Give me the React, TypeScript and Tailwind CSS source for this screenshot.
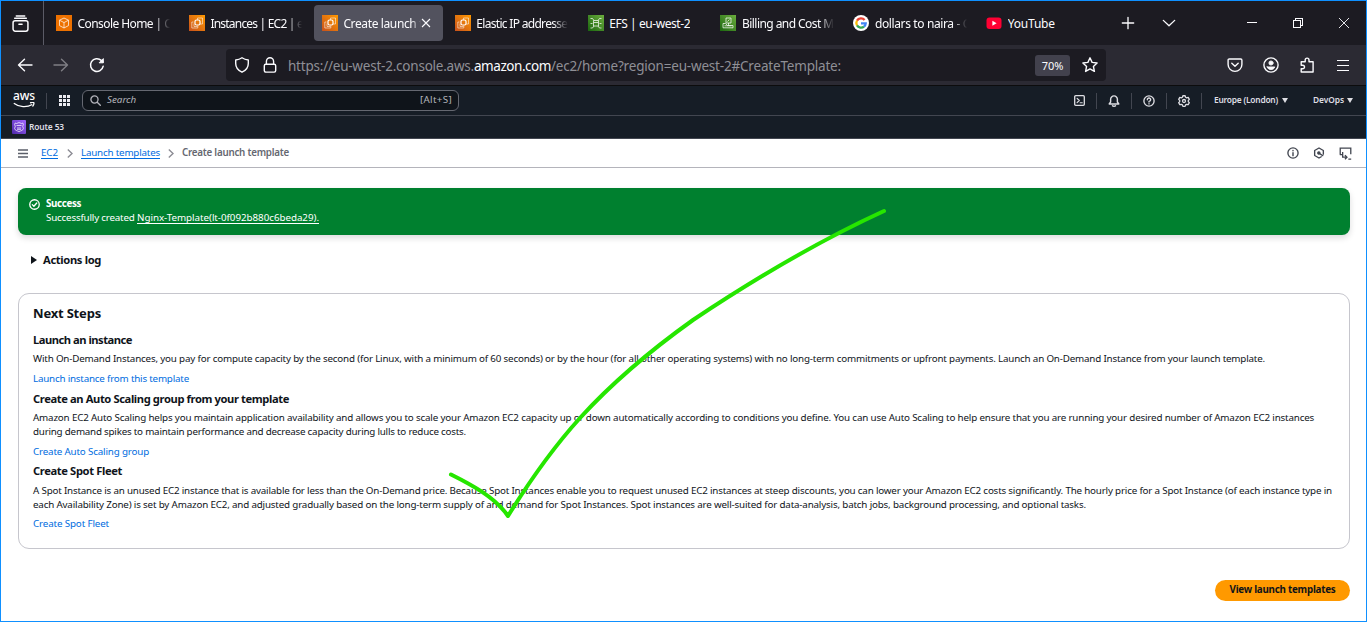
import React from 'react';

type FavKind = 'console' | 'ec2' | 'efs' | 'billing' | 'google' | 'youtube';

const Fav = ({ kind }: { kind: FavKind }) => {
  if (kind === 'google')
    return (
      <svg viewBox="0 0 16 16" className="size-4 shrink-0">
        <circle cx="8" cy="8" r="8" fill="#fff" />
        <g fill="none" strokeWidth="2.3">
          <path d="M11.600 4.900A4.700 4.700 0 0 0 4 5.600" stroke="#ea4335" />
          <path d="M4 5.600A4.700 4.700 0 0 0 4 10.400" stroke="#fbbc05" />
          <path d="M4 10.400A4.700 4.700 0 0 0 11 11.600" stroke="#34a853" />
          <path d="M11 11.600A4.700 4.700 0 0 0 12.700 8.300H8" stroke="#4285f4" />
        </g>
      </svg>
    );
  if (kind === 'youtube')
    return (
      <svg viewBox="0 0 16 16" className="size-4 shrink-0">
        <rect x="0.5" y="2.500" width="15" height="11.500" rx="3" fill="#f03" />
        <path d="M6.400 5.800v4.900l4.200-2.450z" fill="#fff" />
      </svg>
    );
  const green = kind === 'efs' || kind === 'billing';
  return (
    <svg viewBox="0 0 16 16" className="size-4 shrink-0">
      <defs>
        <linearGradient id={'fav' + kind} x1="0" y1="1" x2="1" y2="0">
          <stop offset="0" stopColor={green ? '#1b660f' : kind === 'console' ? '#ed7100' : '#c8511b'} />
          <stop offset="1" stopColor={green ? '#6cae3e' : kind === 'console' ? '#ed7100' : '#ff9900'} />
        </linearGradient>
      </defs>
      <rect width="16" height="16" fill={`url(#fav${kind})`} />
      <g fill="none" stroke="#fff" strokeOpacity=".8" strokeWidth=".9">
        {kind === 'console' && <path d="M8 3l4.500 2.200v5.400L8 13l-4.500-2.400V5.200zM3.500 5.200L8 7.600l4.500-2.400M8 7.600V13" />}
        {kind === 'ec2' && (
          <g>
            <rect x="6" y="5" width="5" height="5" rx="1.500" strokeWidth="1.200" strokeOpacity="1" />
            <path d="M8.500 5V3h5v6h-2.500M4.500 7H2.800v6h6v-2.500M5 8.500v3h3.500" strokeOpacity=".6" />
          </g>
        )}
        {kind === 'efs' && (
          <path d="M5.500 5.500h5v2h-5zM5.500 7.500v3.500h5V7.500M2.500 3.500h2l1.500 2M13.500 3.500h-2l-1.500 2M2.500 13h2l1.500-2M13.500 13h-2l-1.500-2M2.500 8.500h2M11.500 8.500h2" />
        )}
        {kind === 'billing' && <path d="M6 3h5v5H6zM3 8.500h2.500l2 2h5.500M3 12.800h10M3 8.500v4.300M13 10.500v2.300M7.500 6.500l2-2M8.500 8v2.500M4.500 10.800h7" />}
      </g>
    </svg>
  );
};

const fadeClasses = {
  none: '',
  wide: 'w-[92px] [mask-image:linear-gradient(to_right,#000_84%,transparent)]',
  active: 'w-[78px] [mask-image:linear-gradient(to_right,#000_88%,transparent)]',
};

const Tab = ({ kind, c, text, fade = 'wide' }: { kind: FavKind; c: string; text: string; fade?: keyof typeof fadeClasses }) => (
  <div className="h-full w-[132.9px] shrink-0 py-1 pr-[3.9px]">
    <div className={'flex h-full items-center rounded pl-2 ' + (fade === 'active' ? 'bg-[#52525e]' : '')}>
      <Fav kind={kind} />
      <div className={'ml-[5.6px] overflow-hidden whitespace-pre pt-px text-xs leading-5 text-[#fbfbfe] ' + fadeClasses[fade] + ' ' + c}>{text}</div>
      {fade === 'active' && (
        <svg viewBox="0 0 10 10" className="size-[10px] shrink-0" stroke="#fbfbfe" strokeWidth="1.1">
          <path d="M1 1l8 8M9 1L1 9" />
        </svg>
      )}
    </div>
  </div>
);

const Ico = ({ c, children }: { c: string; children: React.ReactNode }) => (
  <svg viewBox="0 0 16 16" fill="none" stroke="currentColor" strokeWidth="1.4" strokeLinecap="round" strokeLinejoin="round" className={'shrink-0 ' + c}>
    {children}
  </svg>
);

const Divider = ({ c }: { c: string }) => <div className={'h-4 w-px shrink-0 bg-[#424650] ' + c} />;

const TabBar = () => (
  <div className="flex h-11 shrink-0 items-center bg-[#1c1b22] text-[#fbfbfe]">
    <div className="flex h-full w-[43px] shrink-0 items-center justify-center border-r border-[#5b5b66]">
      <Ico c="ml-[-3px] size-[17px]">
        <path d="M4 .9h8M2.500 3.100h11" strokeWidth="1.300" />
        <rect x="1" y="5.300" width="14" height="9.900" rx="2" />
        <path d="M6.500 8.600h3" />
      </Ico>
    </div>
    <div className="flex h-full shrink-0 pl-[4px]">
      <Tab kind="console" c="tracking-[-0.58px]" text="Console Home | C" />
      <Tab kind="ec2" c="tracking-[-0.8px]" text="Instances | EC2 | e" />
      <Tab kind="ec2" c="tracking-[-0.374px]" text="Create launch t" fade="active" />
      <Tab kind="ec2" c="tracking-[-0.69px]" text="Elastic IP addresse" />
      <Tab kind="efs" c="tracking-[-0.427px]" text="EFS | eu-west-2" fade="none" />
      <Tab kind="billing" c="tracking-[-0.56px]" text="Billing and Cost M" />
      <Tab kind="google" c="tracking-[-0.377px]" text="dollars to naira - G" />
      <Tab kind="youtube" c="tracking-[-0.217px]" text="YouTube" fade="none" />
    </div>
    <Ico c="ml-[10px] size-[14px]">
      <path d="M8 1.500v13M1.500 8h13" strokeWidth="1.500" />
    </Ico>
    <Ico c="ml-[27px] size-[14px]">
      <path d="M1.500 5L8 11.200 14.500 5" strokeWidth="1.500" />
    </Ico>
    <svg viewBox="0 0 10 10" className="ml-[71px] size-[10px] shrink-0" stroke="currentColor" shapeRendering="crispEdges">
      <path d="M0 4.500h10" />
    </svg>
    <svg viewBox="0 0 10 10" className="ml-[36px] size-[10px] shrink-0" fill="none" stroke="currentColor" shapeRendering="crispEdges">
      <path d="M.5 2.500h7v7h-7zM2.500 2.500v-2h7v7h-2" />
    </svg>
    <svg viewBox="0 0 10 10" className="ml-[36px] size-[10px] shrink-0" stroke="currentColor" strokeWidth=".9">
      <path d="M0 0l10 10M10 0L0 10" />
    </svg>
  </div>
);

const Toolbar = () => (
  <div className="flex h-[41px] shrink-0 items-center border-b border-[#0c0c0d] bg-[#2b2a33] text-[#fbfbfe]">
    <Ico c="ml-[16px] size-4">
      <path d="M15 8H1.500M7.500 2.300L1.500 8l6 5.700" />
    </Ico>
    <Ico c="ml-5 size-4 opacity-40">
      <path d="M1 8h13.500M8.500 2.300l6 5.700-6 5.700" />
    </Ico>
    <Ico c="ml-5 size-4">
      <path d="M14.200 9.200A6.400 6.400 0 1 1 12.300 3.400L14 5" strokeWidth="1.500" />
      <path d="M14.300 2v3.800h-3.800z" fill="currentColor" strokeWidth="1" />
    </Ico>
    <div className="ml-[121px] flex h-8 w-[880px] shrink-0 items-center rounded bg-[#1c1b22]">
      <Ico c="ml-[8px] size-4">
        <path d="M8 .8C9.700 2 12 2.800 14.300 3v3.400c0 3.700-2.500 7-6.300 8.800-3.800-1.800-6.300-5.100-6.300-8.800V3C4 2.800 6.300 2 8 .8z" />
      </Ico>
      <Ico c="ml-[12px] size-4">
        <rect x="2.300" y="7.200" width="11.400" height="7.900" rx="1.500" />
        <path d="M4.400 7V4.400a3.600 3.600 0 0 1 7.200 0V7" />
      </Ico>
      <div className="ml-[10px] flex whitespace-pre pt-0.5 text-[13.5px] leading-5 text-[#8f8f96]">
        <span className="tracking-[-0.223px]">https://eu-west-2.console.aws.</span>
        <span className="tracking-[-0.452px] text-[#fbfbfe]">amazon.com</span>
        <span className="tracking-[-0.187px]">/ec2/home?region=eu-west-2#CreateTemplate:</span>
      </div>
      <div className="ml-auto flex h-[21px] w-[35px] items-center justify-center rounded-[3px] bg-[#42414d] pt-px text-[11px] leading-none">70%</div>
      <Ico c="ml-[12px] mr-2 size-4">
        <path d="M8 .8l2.100 4.600 5 .6-3.700 3.400 1 5L8 11.900l-4.400 2.500 1-5L.9 6l5-.6z" />
      </Ico>
    </div>
    <Ico c="ml-[121px] size-4">
      <path d="M2.300 2h11.400a1.200 1.200 0 0 1 1.200 1.200V7.500a6.900 6.900 0 0 1-13.800 0V3.200A1.200 1.200 0 0 1 2.300 2zM4.800 6.200L8 9.300l3.200-3.100" />
    </Ico>
    <Ico c="ml-5 size-4">
      <circle cx="8" cy="8" r="7.100" />
      <circle cx="8" cy="6" r="2.100" fill="currentColor" strokeWidth=".8" />
      <path d="M4.200 9.900h7.600c-.5 1.700-2 2.700-3.800 2.700s-3.300-1-3.800-2.700z" fill="currentColor" strokeWidth=".8" />
    </Ico>
    <Ico c="ml-5 size-4">
      <path d="M2.200 15h11.900V4.800H10V3a1.900 1.900 0 0 0-3.800 0v1.800H2.200v3.400h1.500a1.800 1.800 0 0 1 0 3.600H2.200z" />
    </Ico>
    <svg viewBox="0 0 12 11" className="ml-[22px] h-[11px] w-3 shrink-0" stroke="currentColor" shapeRendering="crispEdges">
      <path d="M0 .5h12M0 5.500h12M0 10.500h12" />
    </svg>
  </div>
);

const AwsHeader = () => (
  <div className="flex h-[30px] shrink-0 items-center border-b border-[#424650] bg-[#161d26] text-[#dedee3]">
    <div className="ml-[11px] flex w-6 shrink-0 flex-col items-center">
      <div className="mt-[-1px] h-[10px] text-[12px] font-medium leading-[8px] tracking-[-0.2px] text-white">aws</div>
      <svg viewBox="0 0 22 6" className="h-[6px] w-[22px]" fill="none" stroke="#fff" strokeWidth="1.300">
        <path d="M.8 1.200c5.500 4.200 13 4.400 18.500 1.300M17 .8c2-.5 4-.5 4 .2s-.4 2.400-1.500 3.500" />
      </svg>
    </div>
    <Divider c="ml-[10px]" />
    <svg viewBox="0 0 11 11" className="ml-[12px] size-[11px] shrink-0" fill="#ebebf0" shapeRendering="crispEdges">
      <path d="M0 0h3v3H0zM4 0h3v3H4zM8 0h3v3H8zM0 4h3v3H0zM4 4h3v3H4zM8 4h3v3H8zM0 8h3v3H0zM4 8h3v3H4zM8 8h3v3H8z" />
    </svg>
    <div className="ml-[12px] flex h-[21px] w-[377px] shrink-0 items-center rounded-[6px] border border-[#656871] bg-[#0f141a] text-[9.8px] text-[#b4b4bb]">
      <Ico c="ml-[7px] size-[11px]">
        <circle cx="6.500" cy="6.500" r="5.200" strokeWidth="1.900" />
        <path d="M10.500 10.500l4.500 4.500" strokeWidth="1.900" />
      </Ico>
      <div className="ml-[6px] italic">Search</div>
      <div className="ml-auto mr-[6px] mt-[-1px] tracking-[0.32px]">[Alt+S]</div>
    </div>
    <Ico c="ml-[615px] size-[11px]">
      <rect x="1" y="1" width="14" height="14" rx="1.500" strokeWidth="1.900" />
      <path d="M4.500 4.800L7.700 8l-3.200 3.200M9 11.300h3" strokeWidth="1.700" />
    </Ico>
    <Divider c="ml-[11px]" />
    <Ico c="ml-[11px] size-[12px]">
      <path d="M8 1.200a4.500 4.500 0 0 0-4.500 4.500v3.600L1.600 12h12.800l-1.900-2.700V5.700A4.500 4.500 0 0 0 8 1.200zM6 14.300c.8 1 3.200 1 4 0" strokeWidth="1.900" />
    </Ico>
    <Divider c="ml-[11px]" />
    <Ico c="ml-[11px] size-[12px]">
      <circle cx="8" cy="8" r="6.800" strokeWidth="1.800" />
      <path d="M5.800 6.300A2.200 2.200 0 1 1 8 8.400v.9M8 11.500v.4" strokeWidth="1.800" />
    </Ico>
    <Divider c="ml-[11px]" />
    <Ico c="ml-[11px] size-[12px]">
      <path d="M6.500 1h3l.6 2 1.500.8 2-.6 1.500 2.600L13.700 7.300v1.500l1.400 1.500-1.500 2.600-2-.5-1.500.8-.6 1.900h-3l-.6-1.900-1.500-.8-2 .5L.900 10.300l1.400-1.500V7.300L.9 5.800l1.500-2.600 2 .6 1.500-.8z" strokeWidth="1.700" />
      <circle cx="8" cy="8" r="2" strokeWidth="1.700" />
    </Ico>
    <Divider c="ml-[11px]" />
    <div className="ml-[12px] whitespace-nowrap text-[8.4px] font-semibold tracking-[-0.216px]">Europe (London)</div>
    <svg viewBox="0 0 6 5" className="ml-[4px] h-[5px] w-[6px] shrink-0" fill="currentColor">
      <path d="M0 0h6L3 5z" />
    </svg>
    <div className="ml-[25px] text-[8.4px] font-semibold tracking-[-0.068px]">DevOps</div>
    <svg viewBox="0 0 6 5" className="ml-[3px] h-[5px] w-[6px] shrink-0" fill="currentColor">
      <path d="M0 0h6L3 5z" />
    </svg>
  </div>
);

const ServiceBar = () => (
  <div className="flex h-[23px] shrink-0 items-center border-b border-[#424650] bg-[#161d26] text-[#dedee3]">
    <svg viewBox="0 0 14 14" className="ml-[11px] size-[14px] shrink-0">
      <defs>
        <linearGradient id="r53" x1="0" y1="1" x2="1" y2="0">
          <stop offset="0" stopColor="#4d27a8" />
          <stop offset="1" stopColor="#a166ff" />
        </linearGradient>
      </defs>
      <rect width="14" height="14" rx="1" fill="url(#r53)" />
      <g fill="none" stroke="#fff" strokeOpacity=".8" strokeWidth=".9">
        <path d="M3.200 3l1.300.5L7 2.600l2.500.9 1.300-.5.600 1.700-.7 1.500.7 2.300C11 10.500 9 10.600 7 11.600 5 10.600 3 10.500 2.600 8.500l.7-2.300-.7-1.500z" />
        <path d="M4.500 5.500h5M5 7.500c.5.800 1.500.8 2 0 .5.800 1.500.8 2 0M5 9.300h4" />
      </g>
    </svg>
    <div className="ml-[3px] text-[8.4px] font-semibold tracking-[-0.121px]">Route 53</div>
  </div>
);

const Chevron = ({ c }: { c: string }) => (
  <svg viewBox="0 0 6 9" className={'h-[9px] w-[6px] shrink-0 ' + c} fill="none" stroke="#8c8c94" strokeWidth="1.400">
    <path d="M.8.6L5 4.500.8 8.400" />
  </svg>
);

const Breadcrumbs = () => (
  <div className="flex h-[29px] shrink-0 items-center border-b border-[#b4b4bb] text-[9.8px] leading-[11px] text-[#006ce0]">
    <svg viewBox="0 0 10 9" className="ml-[17px] h-[9px] w-[10px] shrink-0" stroke="#5b5f69" strokeWidth="1.400">
      <path d="M0 1h10M0 4.500h10M0 8h10" />
    </svg>
    <div className="ml-[13px] mt-[-1px] whitespace-nowrap border-b border-[#006ce0] tracking-[-0.083px]">EC2</div>
    <Chevron c="ml-[9px]" />
    <div className="ml-[8px] mt-[-1px] whitespace-nowrap border-b border-[#006ce0] tracking-[-0.192px]">Launch templates</div>
    <Chevron c="ml-[8px]" />
    <div className="ml-[8px] mt-[-1px] whitespace-nowrap pb-px font-semibold tracking-[-0.237px] text-[#656871]">Create launch template</div>
    <div className="ml-auto mr-[14px] flex items-center text-[#424650]">
      <Ico c="size-[12px]">
        <circle cx="8" cy="8" r="6.800" strokeWidth="1.800" />
        <path d="M8 7.500v4M8 4.600v.3" strokeWidth="1.900" />
      </Ico>
      <Ico c="ml-[14px] size-[12px]">
        <path d="M13.800 9.500V4.700L8 1.300 2.200 4.700v6.600L8 14.700l3-1.700" strokeWidth="1.800" />
        <path d="M7.500 8l5.500 3.500" strokeWidth="1.800" />
        <circle cx="7.800" cy="8" r="1.600" fill="currentColor" />
      </Ico>
      <Ico c="ml-[14px] size-[13px]">
        <path d="M1.500 9.500v-8h13V9M1 9.500h3.500M4.500 6v6.500h4.500M7.300 10l2.500 2.500-2.500 2.500M11.500 14.800H15" strokeWidth="1.600" strokeLinejoin="miter" strokeLinecap="butt" />
      </Ico>
    </div>
  </div>
);

export default function App() {
  return (
    <div className="relative flex h-[622px] w-[1367px] flex-col overflow-hidden border border-[#0f90ff] bg-white font-['Noto_Sans',sans-serif]">
      <TabBar />
      <Toolbar />
      <AwsHeader />
      <ServiceBar />
      <Breadcrumbs />
      <main className="flex flex-col whitespace-pre pl-[17px] pr-4 pt-5 text-[9.8px] leading-[14px] text-[#0f141a]">
        <section className="flex h-[47px] rounded-lg bg-[#00802f] pl-[11px] pt-[9px] text-white shadow-[0_3px_6px_rgba(0,7,22,0.14)]">
          <Ico c="mt-[2px] size-[11px]">
            <circle cx="8" cy="8" r="6.900" strokeWidth="1.900" />
            <path d="M4.800 8.200l2.300 2.300 4.200-4.700" strokeWidth="1.900" />
          </Ico>
          <div className="ml-[6px]">
            <div className="font-bold tracking-[-0.366px]">Success</div>
            <div className="flex">
              <span className="tracking-[-0.19px]">Successfully created </span>
              <span className="h-[13px] border-b border-white tracking-[-0.041px]">Nginx-Template(lt-0f092b880c6beda29).</span>
            </div>
          </div>
        </section>
        <div className="mt-[18px] flex h-[14px] items-center pl-[13px]">
          <svg viewBox="0 0 6 8" className="h-[8px] w-[6px]" fill="#0f141a">
            <path d="M0 0l6 4-6 4z" />
          </svg>
          <span className="ml-[6px] text-[11.2px] font-bold tracking-[-0.355px]">Actions log</span>
        </div>
        <section className="mt-[26px] h-[256px] rounded-[11px] border border-[#c6c6cd] pl-[14px] pt-[10px]">
          <h2 className="text-[13px] font-bold leading-[18px] tracking-[-0.192px]">Next Steps</h2>
          <h3 className="mt-[10px] text-[11.2px] font-bold leading-4 tracking-[-0.492px]">Launch an instance</h3>
          <p className="mt-[4px] tracking-[-0.176px]">With On-Demand Instances, you pay for compute capacity by the second (for Linux, with a minimum of 60 seconds) or by the hour (for all other operating systems) with no long-term commitments or upfront payments. Launch an On-Demand Instance from your launch template.</p>
          <a className="mt-[6px] block tracking-[-0.198px] text-[#006ce0]">Launch instance from this template</a>
          <h3 className="mt-[5px] text-[11.2px] font-bold leading-4 tracking-[-0.397px]">Create an Auto Scaling group from your template</h3>
          <p className="mt-[4px] tracking-[-0.166px]">Amazon EC2 Auto Scaling helps you maintain application availability and allows you to scale your Amazon EC2 capacity up or down automatically according to conditions you define. You can use Auto Scaling to help ensure that you are running your desired number of Amazon EC2 instances</p>
          <p className="tracking-[-0.217px]">during demand spikes to maintain performance and decrease capacity during lulls to reduce costs.</p>
          <a className="mt-[6px] block tracking-[-0.166px] text-[#006ce0]">Create Auto Scaling group</a>
          <h3 className="mt-[4px] text-[11.2px] font-bold leading-4 tracking-[-0.381px]">Create Spot Fleet</h3>
          <p className="mt-[5px] tracking-[-0.184px]">A Spot Instance is an unused EC2 instance that is available for less than the On-Demand price. Because Spot Instances enable you to request unused EC2 instances at steep discounts, you can lower your Amazon EC2 costs significantly. The hourly price for a Spot Instance (of each instance type in</p>
          <p className="tracking-[-0.17px]">each Availability Zone) is set by Amazon EC2, and adjusted gradually based on the long-term supply of and demand for Spot Instances. Spot instances are well-suited for data-analysis, batch jobs, background processing, and optional tasks.</p>
          <a className="mt-[5px] block tracking-[-0.135px] text-[#006ce0]">Create Spot Fleet</a>
        </section>
        <button className="mt-[31px] h-[21px] w-[135px] self-end rounded-full bg-[#ff9900] pb-px font-bold leading-[20px] tracking-[-0.24px]">View launch templates</button>
      </main>
      <svg viewBox="440 200 460 330" className="pointer-events-none absolute left-[439px] top-[199px] h-[330px] w-[460px]" fill="none" stroke="#26e600" strokeWidth="4" strokeLinecap="round" strokeLinejoin="round">
        <path d="M451 474.500C470 484 495 497 508 516C529 482 551 450 580 418C611 384 651 350 693 320C765 272 825 238 884 211" />
      </svg>
    </div>
  );
}
